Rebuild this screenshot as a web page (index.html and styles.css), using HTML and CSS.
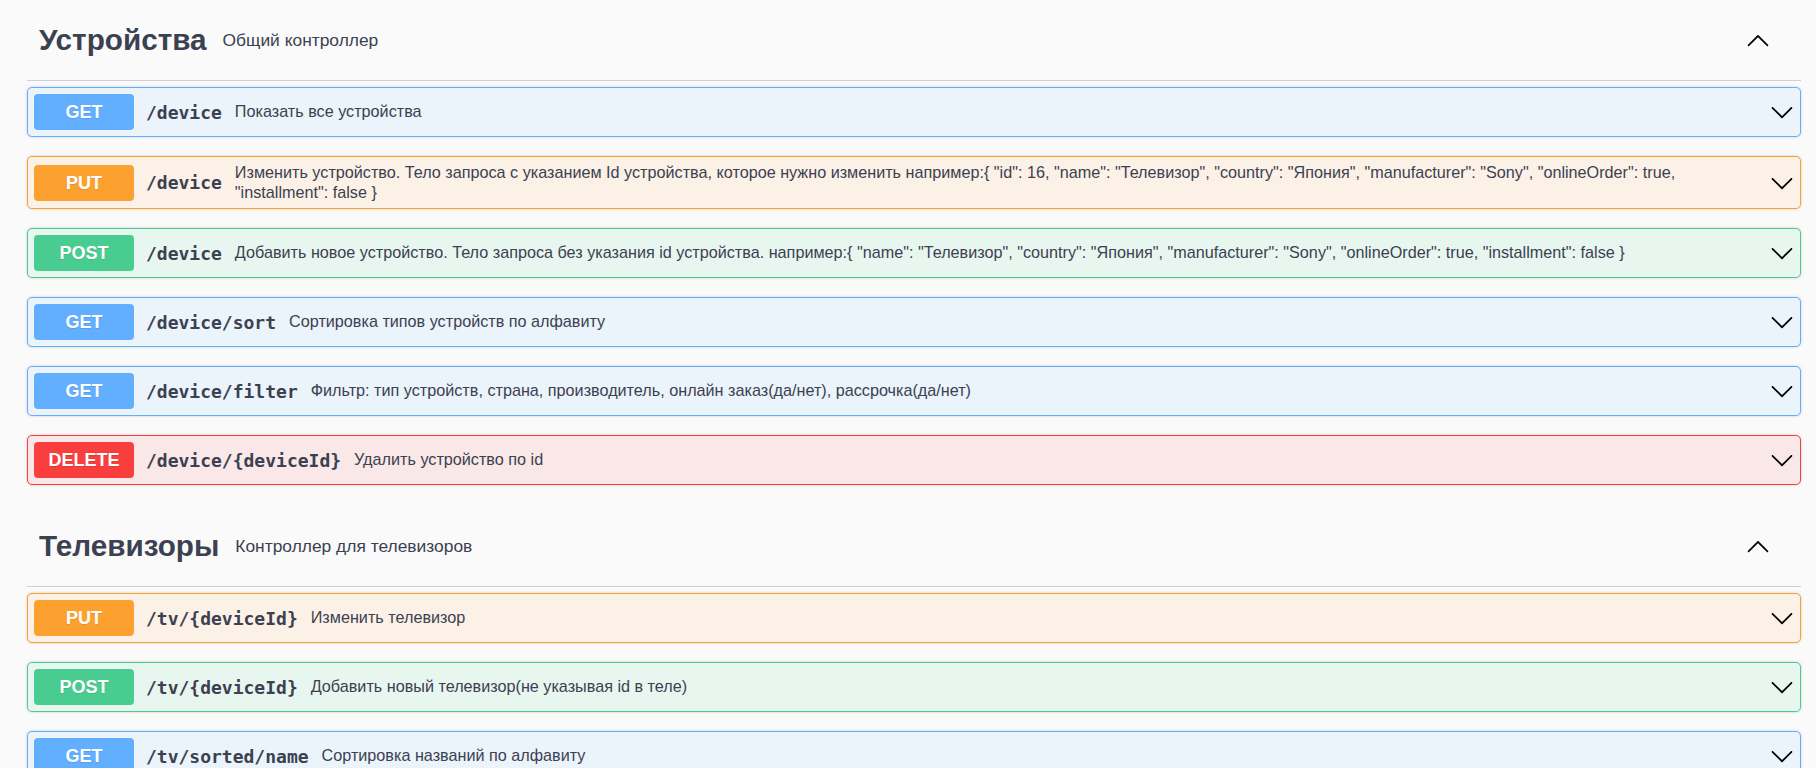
FILE: index.html
```html
<!DOCTYPE html>
<html lang="ru">
<head>
<meta charset="utf-8">
<title>Swagger UI</title>
<link rel="stylesheet" href="styles.css">
</head>
<body>
<div class="wrapper">

  <section class="tag-section">
    <div class="tag-header">
      <h3 class="tag-title">Устройства</h3>
      <span class="tag-desc">Общий контроллер</span>
      <svg class="arrow arrow-up" viewBox="0 0 20 20" width="24" height="24"><path d="M17.418 14.908c.272.268.709.268.979 0s.271-.701 0-.969l-7.908-7.83c-.27-.268-.707-.268-.979 0l-7.908 7.83c-.27.268-.27.701 0 .969.271.268.709.268.979 0L10 7.767l7.418 7.141z"/></svg>
    </div>

    <div class="opblock get">
      <span class="method">GET</span>
      <span class="path">/device</span>
      <span class="desc">Показать все устройства</span>
      <svg class="arrow" viewBox="0 0 20 20" width="24" height="24"><path d="M17.418 6.109c.272-.268.709-.268.979 0s.271.701 0 .969l-7.908 7.83c-.27.268-.707.268-.979 0l-7.908-7.83c-.27-.268-.27-.701 0-.969.271-.268.709-.268.979 0L10 13.25l7.418-7.141z"/></svg>
    </div>

    <div class="opblock put">
      <span class="method">PUT</span>
      <span class="path">/device</span>
      <span class="desc">Изменить устройство. Тело запроса с указанием Id устройства, которое нужно изменить например:{ "id": 16, "name": "Телевизор", "country": "Япония", "manufacturer": "Sony", "onlineOrder": true, "installment": false }</span>
      <svg class="arrow" viewBox="0 0 20 20" width="24" height="24"><path d="M17.418 6.109c.272-.268.709-.268.979 0s.271.701 0 .969l-7.908 7.83c-.27.268-.707.268-.979 0l-7.908-7.83c-.27-.268-.27-.701 0-.969.271-.268.709-.268.979 0L10 13.25l7.418-7.141z"/></svg>
    </div>

    <div class="opblock post">
      <span class="method">POST</span>
      <span class="path">/device</span>
      <span class="desc">Добавить новое устройство. Тело запроса без указания id устройства. например:{ "name": "Телевизор", "country": "Япония", "manufacturer": "Sony", "onlineOrder": true, "installment": false }</span>
      <svg class="arrow" viewBox="0 0 20 20" width="24" height="24"><path d="M17.418 6.109c.272-.268.709-.268.979 0s.271.701 0 .969l-7.908 7.83c-.27.268-.707.268-.979 0l-7.908-7.83c-.27-.268-.27-.701 0-.969.271-.268.709-.268.979 0L10 13.25l7.418-7.141z"/></svg>
    </div>

    <div class="opblock get">
      <span class="method">GET</span>
      <span class="path">/device/sort</span>
      <span class="desc">Сортировка типов устройств по алфавиту</span>
      <svg class="arrow" viewBox="0 0 20 20" width="24" height="24"><path d="M17.418 6.109c.272-.268.709-.268.979 0s.271.701 0 .969l-7.908 7.83c-.27.268-.707.268-.979 0l-7.908-7.83c-.27-.268-.27-.701 0-.969.271-.268.709-.268.979 0L10 13.25l7.418-7.141z"/></svg>
    </div>

    <div class="opblock get">
      <span class="method">GET</span>
      <span class="path">/device/filter</span>
      <span class="desc">Фильтр: тип устройств, страна, производитель, онлайн заказ(да/нет), рассрочка(да/нет)</span>
      <svg class="arrow" viewBox="0 0 20 20" width="24" height="24"><path d="M17.418 6.109c.272-.268.709-.268.979 0s.271.701 0 .969l-7.908 7.83c-.27.268-.707.268-.979 0l-7.908-7.83c-.27-.268-.27-.701 0-.969.271-.268.709-.268.979 0L10 13.25l7.418-7.141z"/></svg>
    </div>

    <div class="opblock delete">
      <span class="method">DELETE</span>
      <span class="path">/device/{deviceId}</span>
      <span class="desc">Удалить устройство по id</span>
      <svg class="arrow" viewBox="0 0 20 20" width="24" height="24"><path d="M17.418 6.109c.272-.268.709-.268.979 0s.271.701 0 .969l-7.908 7.83c-.27.268-.707.268-.979 0l-7.908-7.83c-.27-.268-.27-.701 0-.969.271-.268.709-.268.979 0L10 13.25l7.418-7.141z"/></svg>
    </div>
  </section>

  <section class="tag-section">
    <div class="tag-header">
      <h3 class="tag-title">Телевизоры</h3>
      <span class="tag-desc">Контроллер для телевизоров</span>
      <svg class="arrow arrow-up" viewBox="0 0 20 20" width="24" height="24"><path d="M17.418 14.908c.272.268.709.268.979 0s.271-.701 0-.969l-7.908-7.83c-.27-.268-.707-.268-.979 0l-7.908 7.83c-.27.268-.27.701 0 .969.271.268.709.268.979 0L10 7.767l7.418 7.141z"/></svg>
    </div>

    <div class="opblock put">
      <span class="method">PUT</span>
      <span class="path">/tv/{deviceId}</span>
      <span class="desc">Изменить телевизор</span>
      <svg class="arrow" viewBox="0 0 20 20" width="24" height="24"><path d="M17.418 6.109c.272-.268.709-.268.979 0s.271.701 0 .969l-7.908 7.83c-.27.268-.707.268-.979 0l-7.908-7.83c-.27-.268-.27-.701 0-.969.271-.268.709-.268.979 0L10 13.25l7.418-7.141z"/></svg>
    </div>

    <div class="opblock post">
      <span class="method">POST</span>
      <span class="path">/tv/{deviceId}</span>
      <span class="desc">Добавить новый телевизор(не указывая id в теле)</span>
      <svg class="arrow" viewBox="0 0 20 20" width="24" height="24"><path d="M17.418 6.109c.272-.268.709-.268.979 0s.271.701 0 .969l-7.908 7.83c-.27.268-.707.268-.979 0l-7.908-7.83c-.27-.268-.27-.701 0-.969.271-.268.709-.268.979 0L10 13.25l7.418-7.141z"/></svg>
    </div>

    <div class="opblock get">
      <span class="method">GET</span>
      <span class="path">/tv/sorted/name</span>
      <span class="desc">Сортировка названий по алфавиту</span>
      <svg class="arrow" viewBox="0 0 20 20" width="24" height="24"><path d="M17.418 6.109c.272-.268.709-.268.979 0s.271.701 0 .969l-7.908 7.83c-.27.268-.707.268-.979 0l-7.908-7.83c-.27-.268-.27-.701 0-.969.271-.268.709-.268.979 0L10 13.25l7.418-7.141z"/></svg>
    </div>
  </section>

</div>
</body>
</html>
```

FILE: styles.css
```css
html, body {
  margin: 0;
  padding: 0;
  background: #fafafa;
  overflow: hidden;
}

.wrapper {
  padding: 0 15px 0 27px;
  font-family: "Liberation Sans", Arial, sans-serif;
  color: #3b4151;
}

.tag-section {
  display: flex;
  flex-direction: column;
  margin-bottom: 2px;
}

.tag-header {
  display: flex;
  align-items: center;
  height: 80px;
  padding: 0 31px 0 12px;
  border-bottom: 1px solid #cfd0d3;
  margin-bottom: 6px;
}

.tag-title {
  margin: 0;
  font-size: 29.7px;
  font-weight: bold;
  color: #3b4151;
  line-height: 1.2;
}

.tag-desc {
  flex: 1;
  padding-left: 16px;
  font-size: 17.4px;
  color: #3b4151;
}

.arrow {
  flex: none;
  fill: #000;
}

.opblock {
  display: flex;
  align-items: center;
  padding: 6px;
  margin-bottom: 19px;
  border: 1px solid;
  border-radius: 5px;
  box-shadow: 0 0 3px rgba(0, 0, 0, 0.19);
}

.opblock .arrow {
  margin-left: 12px;
}

.method {
  flex: none;
  width: 100px;
  padding: 9px 0;
  line-height: 18px;
  text-align: center;
  font-size: 18px;
  font-weight: bold;
  color: #fff;
  border-radius: 4px;
  text-shadow: 0 1px 0 rgba(0, 0, 0, 0.1);
}

.path {
  flex: none;
  padding: 0 13px 0 12px;
  font-family: "DejaVu Sans Mono", monospace;
  font-size: 18px;
  font-weight: 600;
  color: #3b4151;
}

.desc {
  flex: 1;
  font-size: 16.2px;
  line-height: 19.5px;
  color: #3b4151;
}

.get { background: #ebf3fb; border-color: #61affe; }
.get .method { background: #61affe; }

.put { background: #fbf1e6; border-color: #fca130; }
.put .method { background: #fca130; }

.post { background: #e8f6f0; border-color: #49cc90; }
.post .method { background: #49cc90; }

.delete { background: #fae7e7; border-color: #f93e3e; }
.delete .method { background: #f93e3e; }
```
